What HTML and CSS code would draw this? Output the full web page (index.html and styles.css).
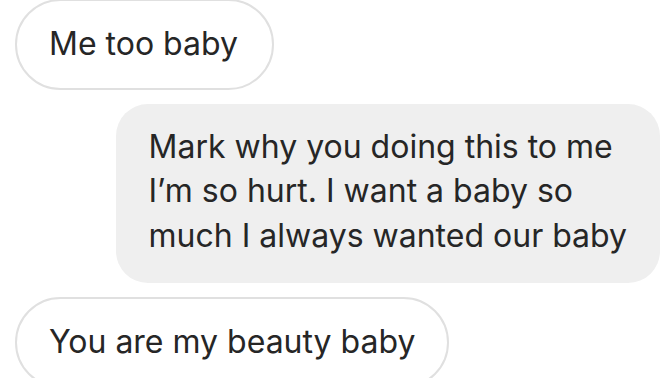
FILE: index.html
```html
<!DOCTYPE html>
<html>
<head>
  <title>Messages</title>
  <link rel="stylesheet" href="styles.css">
</head>
<body>
  <div class="thread">
    <div class="bubble received first">Me too baby</div>
    <div class="bubble sent">Mark why you doing this to me<br>I’m so hurt. I want a baby so<br>much I always wanted our baby</div>
    <div class="bubble received">You are my beauty baby</div>
  </div>
</body>
</html>
```

FILE: styles.css
```css
body {
  margin: 0;
  background-color: #ffffff;
  font-family: Inter, "Liberation Sans", Arial, sans-serif;
  color: #262626;
  overflow: hidden;
}
.thread {
  display: flex;
  flex-direction: column;
  align-items: flex-start;
  gap: 14px;
  padding: 0 12px 0 15px;
}
.bubble {
  font-size: 32px;
  line-height: 44.5px;
  white-space: nowrap;
}
.received {
  border: 2px solid #e0e0e0;
  border-radius: 46px;
  padding: 21px 32px;
}
.first {
  margin-top: -1px;
  padding-right: 34px;
}
.sent {
  align-self: flex-end;
  background-color: #efefef;
  border-radius: 32px;
  padding: 21px 33px 25px 33px;
}
```
